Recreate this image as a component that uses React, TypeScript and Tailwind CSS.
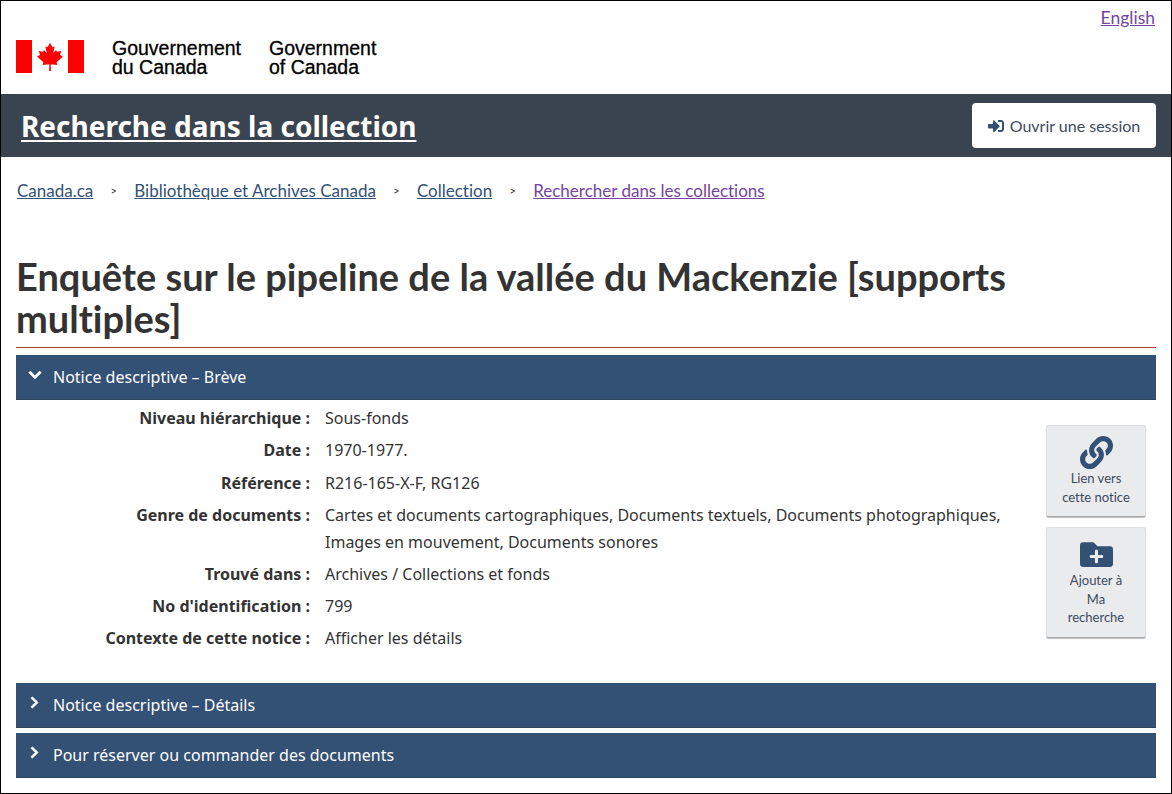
import React from 'react';
import { FaSignInAlt, FaLink, FaFolderPlus, FaChevronDown, FaChevronRight } from 'react-icons/fa';

const NOTICE_ROWS: { label: string; value: React.ReactNode; h: string }[] = [
  { label: 'Niveau hiérarchique :', value: 'Sous-fonds', h: 'h-[32px]' },
  { label: 'Date :', value: '1970-1977.', h: 'h-[33px]' },
  { label: 'Référence :', value: 'R216-165-X-F, RG126', h: 'h-[32px]' },
  {
    label: 'Genre de documents :',
    value: (
      <>
        Cartes et documents cartographiques, Documents textuels, Documents photographiques,
        <br />
        Images en mouvement, Documents sonores
      </>
    ),
    h: 'h-[59px]',
  },
  { label: 'Trouvé dans :', value: 'Archives / Collections et fonds', h: 'h-[32px]' },
  { label: "No d'identification :", value: '799', h: 'h-[32px]' },
  { label: 'Contexte de cette notice :', value: 'Afficher les détails', h: 'h-[32px]' },
];

const OPEN_SANS = "font-['Noto_Sans','Open_Sans',sans-serif]";

function CanadaFlag() {
  return (
    <svg width="68" height="33" viewBox="0 0 68 33" className="shrink-0">
      <rect x="0" y="0" width="16" height="33" fill="#ff0000" />
      <rect x="52" y="0" width="16" height="33" fill="#ff0000" />
      <polygon
        fill="#ff0000"
        transform="translate(21 2.7)"
        points="13,0 15.4,4.6 17.6,3.5 16.2,10.6 19,7.4 19.9,9 24.2,8.2 23,12.2 26,13.8 19.6,19.6 20.3,22.4 13.7,21.6 13.9,28.2 12.1,28.2 12.3,21.6 5.7,22.4 6.4,19.6 0,13.8 3,12.2 1.8,8.2 6.1,9 7,7.4 9.8,10.6 8.4,3.5 10.6,4.6"
      />
    </svg>
  );
}

function PanelBar({ title, open }: { title: string; open?: boolean }) {
  return (
    <div className="h-[45px] bg-[#335075] text-white flex items-center border-b border-[#2c4563]">
      <span className="w-[37px] pl-[12px] flex items-center -mt-[5px]">
        {open ? (
          <FaChevronDown size={14} stroke="currentColor" strokeWidth={30} />
        ) : (
          <FaChevronRight size={13} stroke="currentColor" strokeWidth={30} />
        )}
      </span>
      <span className="text-[16px]">{title}</span>
    </div>
  );
}

function SideButton({ icon, lines }: { icon: React.ReactNode; lines: string[] }) {
  return (
    <div className="w-[100px] bg-[#eaebed] border border-[#dcdee1] border-b-[#a9a9a9] rounded-[3px] shadow-[0_1px_1px_rgba(0,0,0,0.25)] flex flex-col items-center pt-[10px] pb-[10px] font-['Lato',sans-serif] text-[13px] leading-[18.5px]">
      {icon}
      {lines.map(l => (
        <span key={l} className="text-[#3b4a5e]">{l}</span>
      ))}
    </div>
  );
}

export default function App() {
  return (
    <div className={`w-[1172px] h-[794px] border border-black bg-white overflow-hidden text-[#333] [font-variant-ligatures:none] ${OPEN_SANS}`}>
      <div className="h-[93px] relative">
        <a className="absolute right-[16px] top-[7px] text-[17.5px] leading-[20px] underline text-[#75459f] font-['Lato',sans-serif]">English</a>
        <div className="flex items-start pt-[39px] pl-[15px]">
          <CanadaFlag />
          <div className="ml-[28px] text-[19.5px] leading-[18.5px] font-['Liberation_Sans',sans-serif] text-black mt-[-1px] [-webkit-text-stroke:0.3px_black] w-[157px]">
            Gouvernement<br />du Canada
          </div>
          <div className="text-[19.5px] leading-[18.5px] font-['Liberation_Sans',sans-serif] text-black mt-[-1px] [-webkit-text-stroke:0.3px_black]">
            Government<br />of Canada
          </div>
        </div>
      </div>

      <div className="h-[63px] bg-[#3a4350] flex items-center justify-between pl-[20px] pr-[15px]">
        <a className="text-white text-[28px] font-bold underline decoration-2 underline-offset-[3px]">Recherche dans la collection</a>
        <button className="w-[184px] h-[45px] bg-white rounded-[4px] flex items-center justify-center gap-[6px] text-[16px] text-[#3c4a5e] font-['Lato',sans-serif]">
          <FaSignInAlt size={16} className="text-[#335075]" />
          Ouvrir une session
        </button>
      </div>

      <nav className="flex items-center h-[68px] pl-[16px] text-[17px] font-['Lato',sans-serif] text-[#335075]">
        <a className="underline">Canada.ca</a>
        <span className="w-[41px] text-center text-[11px] text-[#333]">&gt;</span>
        <a className="underline">Bibliothèque et Archives Canada</a>
        <span className="w-[41px] text-center text-[11px] text-[#333]">&gt;</span>
        <a className="underline">Collection</a>
        <span className="w-[41px] text-center text-[11px] text-[#333]">&gt;</span>
        <a className="underline text-[#75459f]">Rechercher dans les collections</a>
      </nav>

      <div className="px-[15px]">
        <h1 className="mt-[30px] pb-[8px] border-b border-[#af3c43] font-['Lato',sans-serif] font-bold text-[38px] leading-[42px] text-[#333]">
          Enquête sur le pipeline de la vallée du Mackenzie [supports multiples]
        </h1>

        <div className="mt-[7px]">
          <PanelBar title="Notice descriptive – Brève" open />
        </div>

        <div className="flex h-[283px]">
          <dl className="flex-1 pt-[5px] text-[16px]">
            {NOTICE_ROWS.map(row => (
              <div key={row.label} className={`flex leading-[27px] ${row.h}`}>
                <dt className="w-[294px] text-right font-bold">{row.label}</dt>
                <dd className="ml-[15px]">{row.value}</dd>
              </div>
            ))}
          </dl>
          <div className="w-[100px] mr-[10px] pt-[25px] flex flex-col gap-[10px]">
            <SideButton icon={<FaLink size={33} className="text-[#335075] shrink-0" />} lines={['Lien vers', 'cette notice']} />
            <SideButton icon={<FaFolderPlus size={33} className="text-[#335075] shrink-0" />} lines={['Ajouter à', 'Ma', 'recherche']} />
          </div>
        </div>

        <PanelBar title="Notice descriptive – Détails" />
        <div className="mt-[5px]">
          <PanelBar title="Pour réserver ou commander des documents" />
        </div>
      </div>
    </div>
  );
}
